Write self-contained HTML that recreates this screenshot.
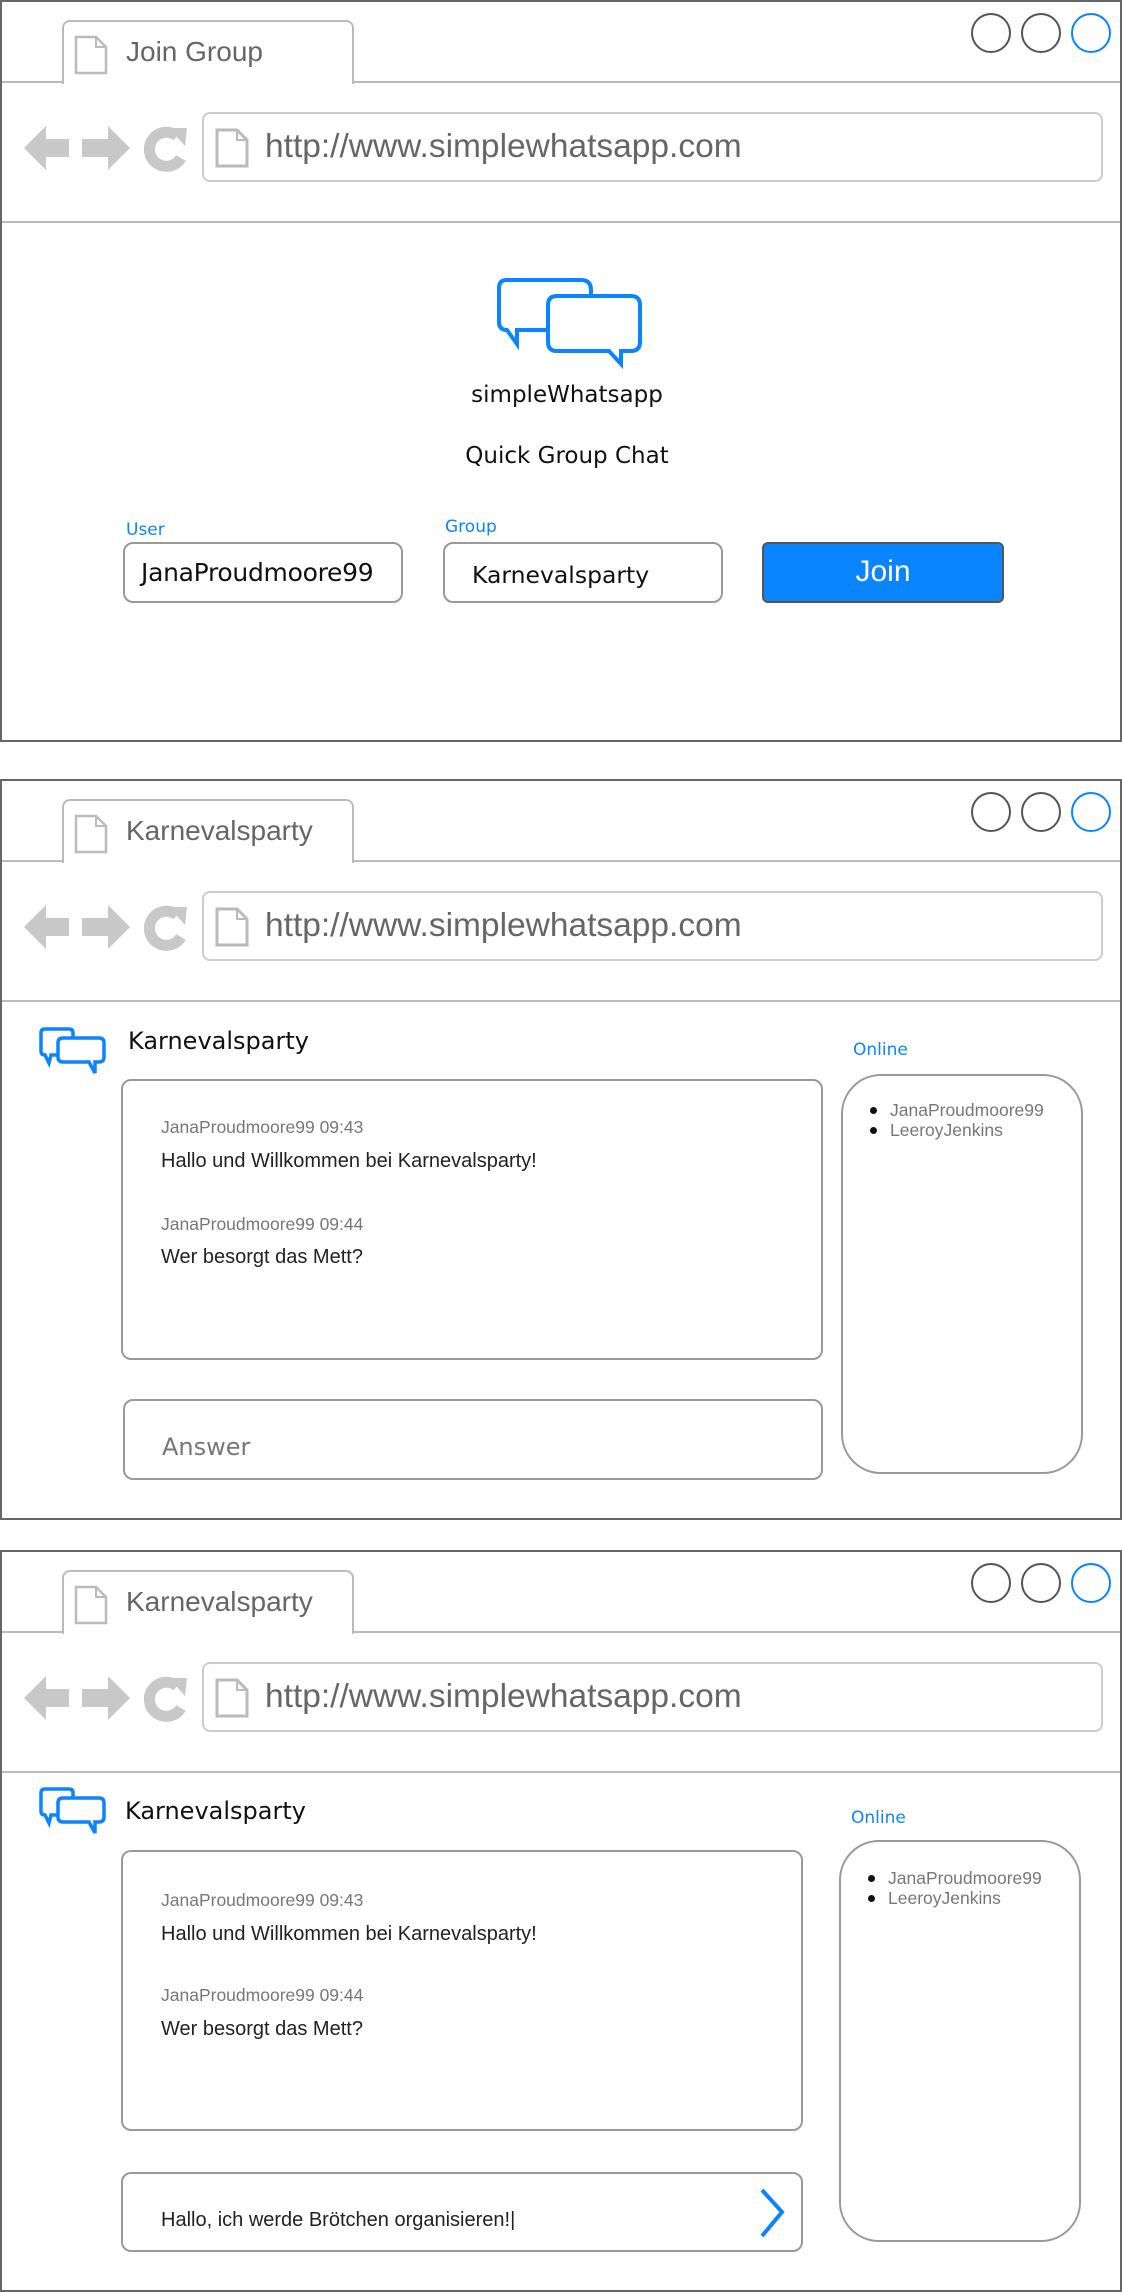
<!DOCTYPE html>
<html><head><meta charset="utf-8"><style>
*{margin:0;padding:0;box-sizing:border-box}
body{width:1122px;height:2292px;background:#fff;position:relative;overflow:hidden;font-family:"Liberation Sans",sans-serif}
.p{position:absolute;left:0;width:1122px;border:2px solid #666;background:#fff}
.a{position:absolute}
.tab{position:absolute;left:60px;top:18px;width:292px;height:64px;border:2px solid #bbb;border-bottom:none;border-radius:8px 8px 0 0;background:#fff}
.tabt{position:absolute;left:124px;top:36px;font-size:28px;color:#666;line-height:1}
.hl{position:absolute;left:0;width:1118px;height:2px;background:#bbb}
.circ{position:absolute;top:11px;width:40px;height:40px;border:2px solid #555;border-radius:50%}
.url{position:absolute;left:200px;top:110px;width:901px;height:70px;border:2px solid #ccc;border-radius:8px}
.urlt{position:absolute;left:263px;top:128px;font-size:33.5px;color:#666;line-height:1}
.dv{font-family:"DejaVu Sans","Liberation Sans",sans-serif}
.box{position:absolute;border:2px solid #999;border-radius:10px}
.meta{position:absolute;font-size:17.5px;color:#777;line-height:1}
.msg{position:absolute;font-size:20px;color:#222;line-height:1}
.lbl{position:absolute;font-size:17px;color:#0a84ff;line-height:1}
.li{position:absolute;font-size:17.5px;color:#777;line-height:1}
.li:before{content:"";position:absolute;left:-20px;top:5px;width:7px;height:7px;border-radius:50%;background:#111}
</style></head><body>

<div class="p" style="top:0;height:742px">
  <div class="hl" style="top:79px"></div>
  <div class="tab"></div>
  <svg class="a" style="left:72px;top:33px" width="34" height="40"><path d="M2 2H22L32 12V38H2Z" fill="#fff" stroke="#bbb" stroke-width="2.5"/><path d="M22 2V12H32" fill="none" stroke="#bbb" stroke-width="2"/></svg>
  <div class="tabt">Join Group</div>
  <div class="circ" style="left:969px"></div><div class="circ" style="left:1019px"></div><div class="circ" style="left:1069px;border-color:#0a84ff"></div>
  <div class="hl" style="top:219px"></div>
  <svg class="a" style="left:20px;top:120px" width="170" height="52"><path d="M2 26L24 4V17H47V35H24V48Z" fill="#c8c8c8"/><path d="M108 26L86 4V17H60V35H86V48Z" fill="#c8c8c8"/><path d="M155 14A17 17 0 1 0 159 36" fill="none" stroke="#c8c8c8" stroke-width="11"/><path d="M147 6L165 6L163 24Z" fill="#c8c8c8"/></svg>
  <div class="url"></div>
  <svg class="a" style="left:213px;top:126px" width="34" height="40"><path d="M2 2H22L32 12V38H2Z" fill="#fff" stroke="#bbb" stroke-width="3"/><path d="M22 2V12H32" fill="none" stroke="#bbb" stroke-width="2"/></svg>
  <div class="urlt">http://www.simplewhatsapp.com</div>

  <svg class="a" style="left:495px;top:276px" width="150" height="92"><path d="M10 2H84Q94 2 94 12V18" fill="none" stroke="#0a84ff" stroke-width="4"/><path d="M50 52H20L20 66L10 52Q2 52 2 44V10Q2 2 10 2" fill="none" stroke="#0a84ff" stroke-width="4"/><path d="M60 18H134Q143 18 143 27V64Q143 73 134 73H124V86L112 73H60Q51 73 51 64V27Q51 18 60 18Z" fill="#fff" stroke="#0a84ff" stroke-width="4"/></svg>
  <div class="a dv" style="left:0;width:1130px;text-align:center;top:380px;font-size:23px;color:#111">simpleWhatsapp</div>
  <div class="a dv" style="left:0;width:1130px;text-align:center;top:441px;font-size:23px;color:#111">Quick Group Chat</div>
  <div class="lbl dv" style="left:124px;top:520px">User</div>
  <div class="lbl dv" style="left:443px;top:517px">Group</div>
  <div class="box" style="left:121px;top:540px;width:280px;height:61px"></div>
  <div class="a dv" style="left:139px;top:556px;font-size:25px;color:#111;letter-spacing:-0.3px">JanaProudmoore99</div>
  <div class="box" style="left:441px;top:540px;width:280px;height:61px"></div>
  <div class="a dv" style="left:470px;top:559px;font-size:23.5px;color:#111">Karnevalsparty</div>
  <div class="a" style="left:760px;top:540px;width:242px;height:61px;background:#0a84ff;border:2px solid #555;border-radius:6px;color:#fff;font-size:30px;text-align:center;line-height:55px">Join</div>
</div>

<div class="p" style="top:779px;height:741px">
  <div class="hl" style="top:79px"></div>
  <div class="tab"></div>
  <svg class="a" style="left:72px;top:33px" width="34" height="40"><path d="M2 2H22L32 12V38H2Z" fill="#fff" stroke="#bbb" stroke-width="2.5"/><path d="M22 2V12H32" fill="none" stroke="#bbb" stroke-width="2"/></svg>
  <div class="tabt">Karnevalsparty</div>
  <div class="circ" style="left:969px"></div><div class="circ" style="left:1019px"></div><div class="circ" style="left:1069px;border-color:#0a84ff"></div>
  <div class="hl" style="top:219px"></div>
  <svg class="a" style="left:20px;top:120px" width="170" height="52"><path d="M2 26L24 4V17H47V35H24V48Z" fill="#c8c8c8"/><path d="M108 26L86 4V17H60V35H86V48Z" fill="#c8c8c8"/><path d="M155 14A17 17 0 1 0 159 36" fill="none" stroke="#c8c8c8" stroke-width="11"/><path d="M147 6L165 6L163 24Z" fill="#c8c8c8"/></svg>
  <div class="url"></div>
  <svg class="a" style="left:213px;top:126px" width="34" height="40"><path d="M2 2H22L32 12V38H2Z" fill="#fff" stroke="#bbb" stroke-width="3"/><path d="M22 2V12H32" fill="none" stroke="#bbb" stroke-width="2"/></svg>
  <div class="urlt">http://www.simplewhatsapp.com</div>

  <svg class="a" style="left:37px;top:246px" width="68" height="50"><path d="M6 2H30Q34 2 34 6V10" fill="none" stroke="#0a84ff" stroke-width="3.5"/><path d="M20 28H12L10 36L6 28Q2 28 2 24V6Q2 2 6 2" fill="none" stroke="#0a84ff" stroke-width="3.5"/><path d="M24 11H60Q65 11 65 16V30Q65 35 60 35H56V46L50 35H24Q19 35 19 30V16Q19 11 24 11Z" fill="#fff" stroke="#0a84ff" stroke-width="3.5"/></svg>
  <div class="a dv" style="left:126px;top:246px;font-size:24px;color:#111">Karnevalsparty</div>
  <div class="lbl dv" style="left:851px;top:261px">Online</div>
  <div class="box" style="left:119px;top:298px;width:702px;height:281px"></div>
  <div class="meta" style="left:159px;top:338px">JanaProudmoore99 09:43</div>
  <div class="msg" style="left:159px;top:370px">Hallo und Willkommen bei Karnevalsparty!</div>
  <div class="meta" style="left:159px;top:435px">JanaProudmoore99 09:44</div>
  <div class="msg" style="left:159px;top:466px">Wer besorgt das Mett?</div>
  <div class="box" style="left:121px;top:618px;width:700px;height:81px"></div>
  <div class="a dv" style="left:160px;top:652px;font-size:24px;color:#777">Answer</div>
  <div class="box" style="left:839px;top:293px;width:242px;height:400px;border-radius:40px"></div>
  <div class="li" style="left:888px;top:321px">JanaProudmoore99</div>
  <div class="li" style="left:888px;top:341px">LeeroyJenkins</div>
</div>

<div class="p" style="top:1550px;height:742px">
  <div class="hl" style="top:79px"></div>
  <div class="tab"></div>
  <svg class="a" style="left:72px;top:33px" width="34" height="40"><path d="M2 2H22L32 12V38H2Z" fill="#fff" stroke="#bbb" stroke-width="2.5"/><path d="M22 2V12H32" fill="none" stroke="#bbb" stroke-width="2"/></svg>
  <div class="tabt">Karnevalsparty</div>
  <div class="circ" style="left:969px"></div><div class="circ" style="left:1019px"></div><div class="circ" style="left:1069px;border-color:#0a84ff"></div>
  <div class="hl" style="top:219px"></div>
  <svg class="a" style="left:20px;top:120px" width="170" height="52"><path d="M2 26L24 4V17H47V35H24V48Z" fill="#c8c8c8"/><path d="M108 26L86 4V17H60V35H86V48Z" fill="#c8c8c8"/><path d="M155 14A17 17 0 1 0 159 36" fill="none" stroke="#c8c8c8" stroke-width="11"/><path d="M147 6L165 6L163 24Z" fill="#c8c8c8"/></svg>
  <div class="url"></div>
  <svg class="a" style="left:213px;top:126px" width="34" height="40"><path d="M2 2H22L32 12V38H2Z" fill="#fff" stroke="#bbb" stroke-width="3"/><path d="M22 2V12H32" fill="none" stroke="#bbb" stroke-width="2"/></svg>
  <div class="urlt">http://www.simplewhatsapp.com</div>

  <svg class="a" style="left:37px;top:235px" width="68" height="50"><path d="M6 2H30Q34 2 34 6V10" fill="none" stroke="#0a84ff" stroke-width="3.5"/><path d="M20 28H12L10 36L6 28Q2 28 2 24V6Q2 2 6 2" fill="none" stroke="#0a84ff" stroke-width="3.5"/><path d="M24 11H60Q65 11 65 16V30Q65 35 60 35H56V46L50 35H24Q19 35 19 30V16Q19 11 24 11Z" fill="#fff" stroke="#0a84ff" stroke-width="3.5"/></svg>
  <div class="a dv" style="left:123px;top:245px;font-size:24px;color:#111">Karnevalsparty</div>
  <div class="lbl dv" style="left:849px;top:258px">Online</div>
  <div class="box" style="left:119px;top:298px;width:682px;height:281px"></div>
  <div class="meta" style="left:159px;top:340px">JanaProudmoore99 09:43</div>
  <div class="msg" style="left:159px;top:372px">Hallo und Willkommen bei Karnevalsparty!</div>
  <div class="meta" style="left:159px;top:435px">JanaProudmoore99 09:44</div>
  <div class="msg" style="left:159px;top:467px">Wer besorgt das Mett?</div>
  <div class="box" style="left:119px;top:620px;width:682px;height:80px"></div>
  <div class="msg" style="left:159px;top:658px">Hallo, ich werde Brötchen organisieren!|</div>
  <svg class="a" style="left:756px;top:636px" width="30" height="50"><path d="M4 2L24 24L4 48" fill="none" stroke="#0a84ff" stroke-width="4"/></svg>
  <div class="box" style="left:837px;top:288px;width:242px;height:402px;border-radius:40px"></div>
  <div class="li" style="left:886px;top:318px">JanaProudmoore99</div>
  <div class="li" style="left:886px;top:338px">LeeroyJenkins</div>
</div>
</body></html>
